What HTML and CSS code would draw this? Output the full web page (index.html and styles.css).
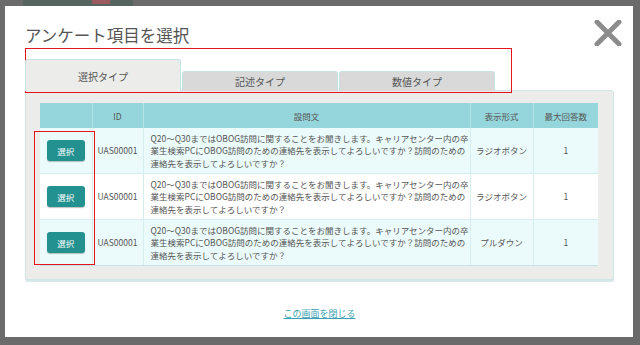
FILE: index.html
```html
<!DOCTYPE html>
<html lang="ja">
<head>
  <meta charset="UTF-8">
  <title>アンケート項目を選択</title>
  <link rel="stylesheet" href="styles.css">
</head>
<body>
  <div class="backdrop-head">
    <div class="backdrop-title"><span class="badge"></span></div>
  </div>
  <div class="modal">
    <div class="modal-head">
      <h1 class="modal-title">アンケート項目を選択</h1>
      <button class="close-btn" aria-label="閉じる">
        <svg width="28" height="26" viewBox="0 0 28 26">
          <path d="M3 2 L25 24 M25 2 L3 24" stroke="#8c8c8c" stroke-width="5" stroke-linecap="round"/>
        </svg>
      </button>
    </div>

    <div class="tabs">
      <div class="tab active">選択タイプ</div>
      <div class="tab">記述タイプ</div>
      <div class="tab">数値タイプ</div>
    </div>

    <div class="panel">
      <table class="q-table">
        <colgroup>
          <col class="col-btn">
          <col class="col-id">
          <col class="col-text">
          <col class="col-type">
          <col class="col-max">
        </colgroup>
        <thead>
          <tr>
            <th></th>
            <th>ID</th>
            <th>設問文</th>
            <th>表示形式</th>
            <th>最大回答数</th>
          </tr>
        </thead>
        <tbody>
          <tr>
            <td class="cell-btn"><button class="select-btn">選択</button></td>
            <td>UAS00001</td>
            <td class="cell-text">Q20～Q30まではOBOG訪問に関することをお聞きします。キャリアセンター内の卒<br>業生検索PCにOBOG訪問のための連絡先を表示してよろしいですか？訪問のための<br>連絡先を表示してよろしいですか？</td>
            <td>ラジオボタン</td>
            <td>1</td>
          </tr>
          <tr>
            <td class="cell-btn"><button class="select-btn">選択</button></td>
            <td>UAS00001</td>
            <td class="cell-text">Q20～Q30まではOBOG訪問に関することをお聞きします。キャリアセンター内の卒<br>業生検索PCにOBOG訪問のための連絡先を表示してよろしいですか？訪問のための<br>連絡先を表示してよろしいですか？</td>
            <td>ラジオボタン</td>
            <td>1</td>
          </tr>
          <tr>
            <td class="cell-btn"><button class="select-btn">選択</button></td>
            <td>UAS00001</td>
            <td class="cell-text">Q20～Q30まではOBOG訪問に関することをお聞きします。キャリアセンター内の卒<br>業生検索PCにOBOG訪問のための連絡先を表示してよろしいですか？訪問のための<br>連絡先を表示してよろしいですか？</td>
            <td>プルダウン</td>
            <td>1</td>
          </tr>
        </tbody>
      </table>
    </div>

    <div class="modal-foot">
      <a href="#" class="close-link">この画面を閉じる</a>
    </div>

    <!-- annotation frames -->
    <div class="mark mark-tabs"></div>
    <div class="mark mark-btns"></div>
  </div>
</body>
</html>
```

FILE: styles.css
```css
body {
  margin: 0;
  background-color: #6b6b6b;
  font-family: "Noto Sans CJK JP", "Noto Sans", sans-serif;
  color: #555;
  height: 345px;
  overflow: hidden;
}

.backdrop-head {
  height: 6px;
  padding-left: 23px;
}

.backdrop-title {
  width: 110px;
  height: 6px;
  background-color: #56655f;
  position: relative;
}

.badge {
  position: absolute;
  left: 69px;
  top: 0;
  width: 18px;
  height: 4px;
  background-color: #9a5a5e;
}

.modal {
  position: relative;
  margin-left: 5px;
  width: 628px;
  height: 331px;
  box-sizing: border-box;
  background-color: #fff;
  padding: 0 19px 0 20px;
}

.modal-head {
  display: flex;
  justify-content: space-between;
  align-items: flex-start;
  padding-top: 18px;
}

.modal-title {
  margin: 0;
  font-size: 16.5px;
  line-height: 22px;
  font-weight: normal;
  color: #555;
}

.close-btn {
  border: none;
  background: none;
  padding: 0;
  margin: -4px -8px 0 0;
  cursor: pointer;
}

.tabs {
  display: flex;
  align-items: flex-end;
  gap: 1px;
  margin-top: 11px;
  height: 31px;
  position: relative;
  z-index: 1;
}

.tab {
  width: 154px;
  height: 19px;
  line-height: 20px;
  border: 1px solid #c5e2e4;
  border-bottom: none;
  border-radius: 3px 3px 0 0;
  background-color: #d9d9d9;
  font-size: 10px;
  text-align: center;
  color: #555;
}

.tab.active {
  height: 31px;
  line-height: 34px;
  background-color: #ecedea;
}

.panel {
  width: 589px;
  height: 190px;
  box-sizing: border-box;
  margin-top: -1px;
  background-color: #ecedea;
  border: 1px solid #cfe5e6;
  border-radius: 0 3px 3px 3px;
  box-shadow: 0 2px 0 #d6e8e8;
  padding: 12px 15px 0 14px;
}

.q-table {
  width: 558px;
  border-collapse: collapse;
  table-layout: fixed;
  font-size: 8.5px;
}

.col-btn { width: 52px; }
.col-id { width: 51px; }
.col-text { width: 327px; }
.col-type { width: 63px; }
.col-max { width: 65px; }

.q-table th {
  height: 25px;
  padding: 0;
  background-color: #95d5dc;
  border-right: 1px solid #b6e3e7;
  font-weight: normal;
  color: #555;
}

.q-table td {
  padding: 0 2px;
  border-right: 1px solid #d6eef0;
  border-bottom: 1px solid #d6eef0;
  text-align: center;
  line-height: 12.5px;
  height: 45px;
  white-space: nowrap;
}

.q-table th:last-child,
.q-table td:last-child {
  border-right: none;
}

.q-table tbody tr:nth-child(odd) td {
  background-color: #ebfbfb;
}

.q-table tbody tr:nth-child(even) td {
  background-color: #fff;
}

.q-table tbody tr:last-child td {
  border-bottom: 1px solid #c5e3e6;
}

.q-table td.cell-text {
  text-align: left;
  padding: 0 0 0 7px;
  overflow: hidden;
}

.q-table td.cell-btn {
  padding: 0;
}

.select-btn {
  width: 38px;
  height: 21px;
  border: none;
  border-radius: 3px;
  background-color: #22918f;
  box-shadow: 0 1px 1px rgba(0, 0, 0, 0.25);
  color: #fff;
  font-family: inherit;
  font-size: 8.5px;
  padding: 0;
  cursor: pointer;
}

.modal-foot {
  text-align: center;
  padding-top: 18px;
}

.close-link {
  font-size: 9px;
  color: #3a9fb0;
  text-decoration: underline;
}

.mark {
  position: absolute;
  border: 1px solid #e8141c;
  pointer-events: none;
}

.mark-tabs {
  left: 20px;
  top: 42px;
  width: 485px;
  height: 43px;
}

.mark-btns {
  left: 29px;
  top: 125px;
  width: 59px;
  height: 132px;
}
```
